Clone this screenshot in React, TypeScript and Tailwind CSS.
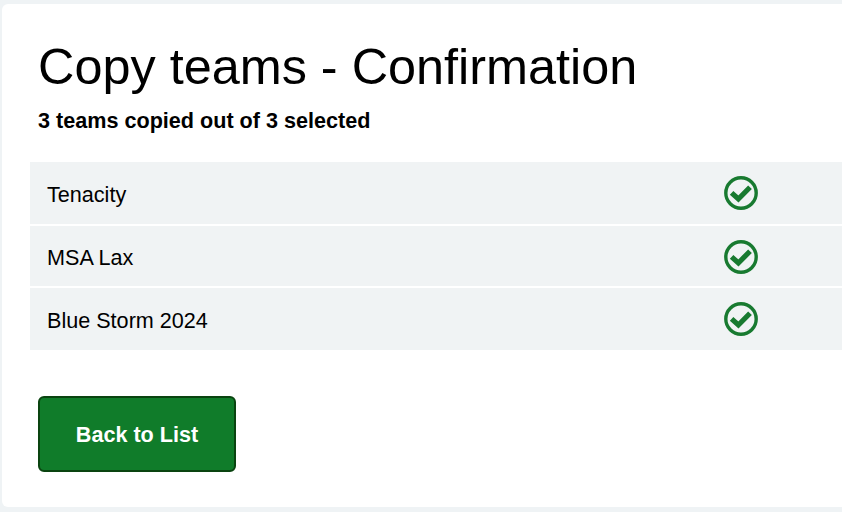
const teams = [
  { name: "Tenacity", row: "h-[62px]", icon: "mt-0" },
  { name: "MSA Lax", row: "h-[60px]", icon: "mt-[2px]" },
  { name: "Blue Storm 2024", row: "h-[62px]", icon: "mt-0" },
];

function CheckIcon({ className }: { className: string }) {
  return (
    <svg viewBox="0 0 34 34" className={`h-[34px] w-[34px] ${className}`} fill="none">
      <circle cx="17" cy="17" r="15.2" stroke="#187a30" strokeWidth="3.4" />
      <path d="M7.6 16.8 L14.4 23 L26 11.2" stroke="#187a30" strokeWidth="5.2" strokeLinejoin="miter" />
    </svg>
  );
}

export default function App() {
  return (
    <div className="w-[842px] h-[512px] overflow-hidden bg-[#eff3f5] pt-[4px] pl-[2px] font-['Liberation_Sans',Arial,sans-serif] text-black">
      <div className="h-[503px] w-[860px] rounded-[6px] bg-white pl-[28px] pt-[33px]">
        <h1 className="ml-[8px] text-[50.4px] leading-[60px] font-normal">Copy teams - Confirmation</h1>
        <p className="ml-[8px] mt-[11px] text-[21.6px] leading-[26px] font-bold">3 teams copied out of 3 selected</p>
        <div className="mt-[28px] flex flex-col gap-[2px]">
          {teams.map((t) => (
            <div key={t.name} className={`flex items-center bg-[#f0f3f4] pl-[17px] ${t.row}`}>
              <span className="w-[677px] pt-[3px] text-[21.6px] leading-[26px]">{t.name}</span>
              <CheckIcon className={t.icon} />
            </div>
          ))}
        </div>
        <button className="ml-[8px] mt-[46px] flex h-[76px] w-[198px] items-center justify-center rounded-[6px] border-2 border-[#0a4410] bg-[#107c2a] pt-[2px] text-[21.6px] font-bold text-white">
          Back to List
        </button>
      </div>
    </div>
  );
}
